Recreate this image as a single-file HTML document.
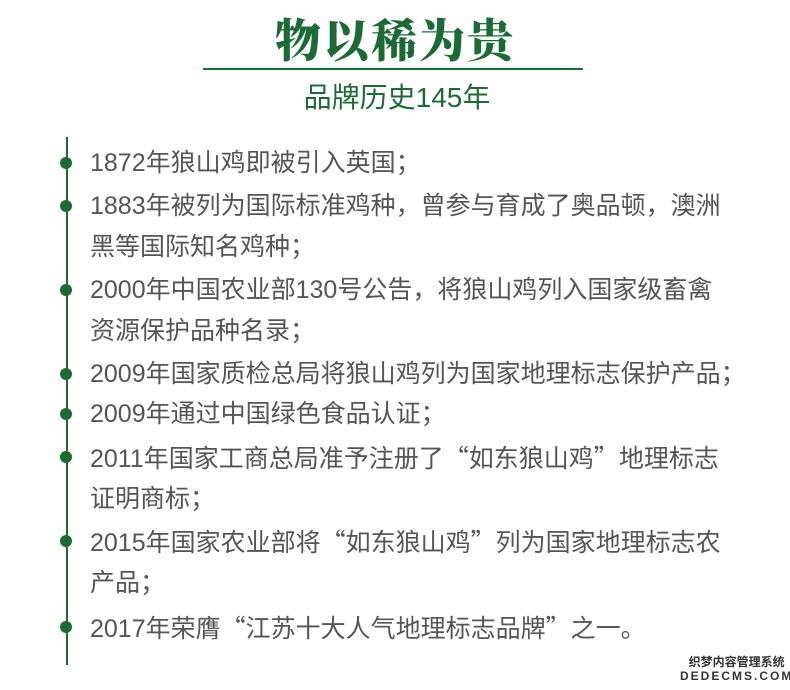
<!DOCTYPE html>
<html><head><meta charset="utf-8"><style>
body{margin:0;width:790px;height:690px;background:#fff;position:relative;overflow:hidden;font-family:"Liberation Sans","Noto Sans CJK SC",sans-serif}
.t{position:absolute;left:0;width:790px;text-align:center;color:#1c6b36}
.l{position:absolute;left:90px;font-size:25px;letter-spacing:0px;color:#555;white-space:nowrap;line-height:30px}
.q{font-family:"Noto Sans CJK SC",sans-serif}
.d{position:absolute;left:60px;width:12px;height:12px;border-radius:50%;background:#1c6b36}
</style></head><body>
<div class="t" style="top:10px;font-size:46px;font-weight:900;font-family:'Noto Serif CJK SC','Noto Sans CJK SC',serif;letter-spacing:2px;line-height:56px">物以稀为贵</div>
<div style="position:absolute;left:203px;top:68px;width:380px;height:2px;background:#1c6b36"></div>
<div class="t" style="top:81px;font-size:28px;line-height:34px;left:2px">品牌历史145年</div>
<div style="position:absolute;left:66px;top:137px;width:2px;height:528px;background:#1c6b36"></div>
<div class="d" style="top:157px"></div><div class="d" style="top:200px"></div><div class="d" style="top:284px"></div><div class="d" style="top:368px"></div><div class="d" style="top:408px"></div><div class="d" style="top:451px"></div><div class="d" style="top:535px"></div><div class="d" style="top:621px"></div>
<div class="l" style="top:148px">1872年狼山鸡即被引入英国；</div>
<div class="l" style="top:191px">1883年被列为国际标准鸡种，曾参与育成了奥品顿，澳洲</div>
<div class="l" style="top:232px">黑等国际知名鸡种；</div>
<div class="l" style="top:275px">2000年中国农业部130号公告，将狼山鸡列入国家级畜禽</div>
<div class="l" style="top:316px">资源保护品种名录；</div>
<div class="l" style="top:359px">2009年国家质检总局将狼山鸡列为国家地理标志保护产品；</div>
<div class="l" style="top:399px">2009年通过中国绿色食品认证；</div>
<div class="l" style="top:442px">2011年国家工商总局准予注册了<span class="q">“</span>如东狼山鸡<span class="q">”</span>地理标志</div>
<div class="l" style="top:484px">证明商标；</div>
<div class="l" style="top:526px">2015年国家农业部将<span class="q">“</span>如东狼山鸡<span class="q">”</span>列为国家地理标志农</div>
<div class="l" style="top:568px">产品；</div>
<div class="l" style="top:612px">2017年荣膺<span class="q">“</span>江苏十大人气地理标志品牌<span class="q">”</span>之一。</div>
<div style="position:absolute;left:680px;top:655px;font-size:12px;font-weight:bold;color:#333;line-height:14px;text-align:center">织梦内容管理系统<br><span style="letter-spacing:2px">DEDECMS.COM</span></div>
</body></html>
